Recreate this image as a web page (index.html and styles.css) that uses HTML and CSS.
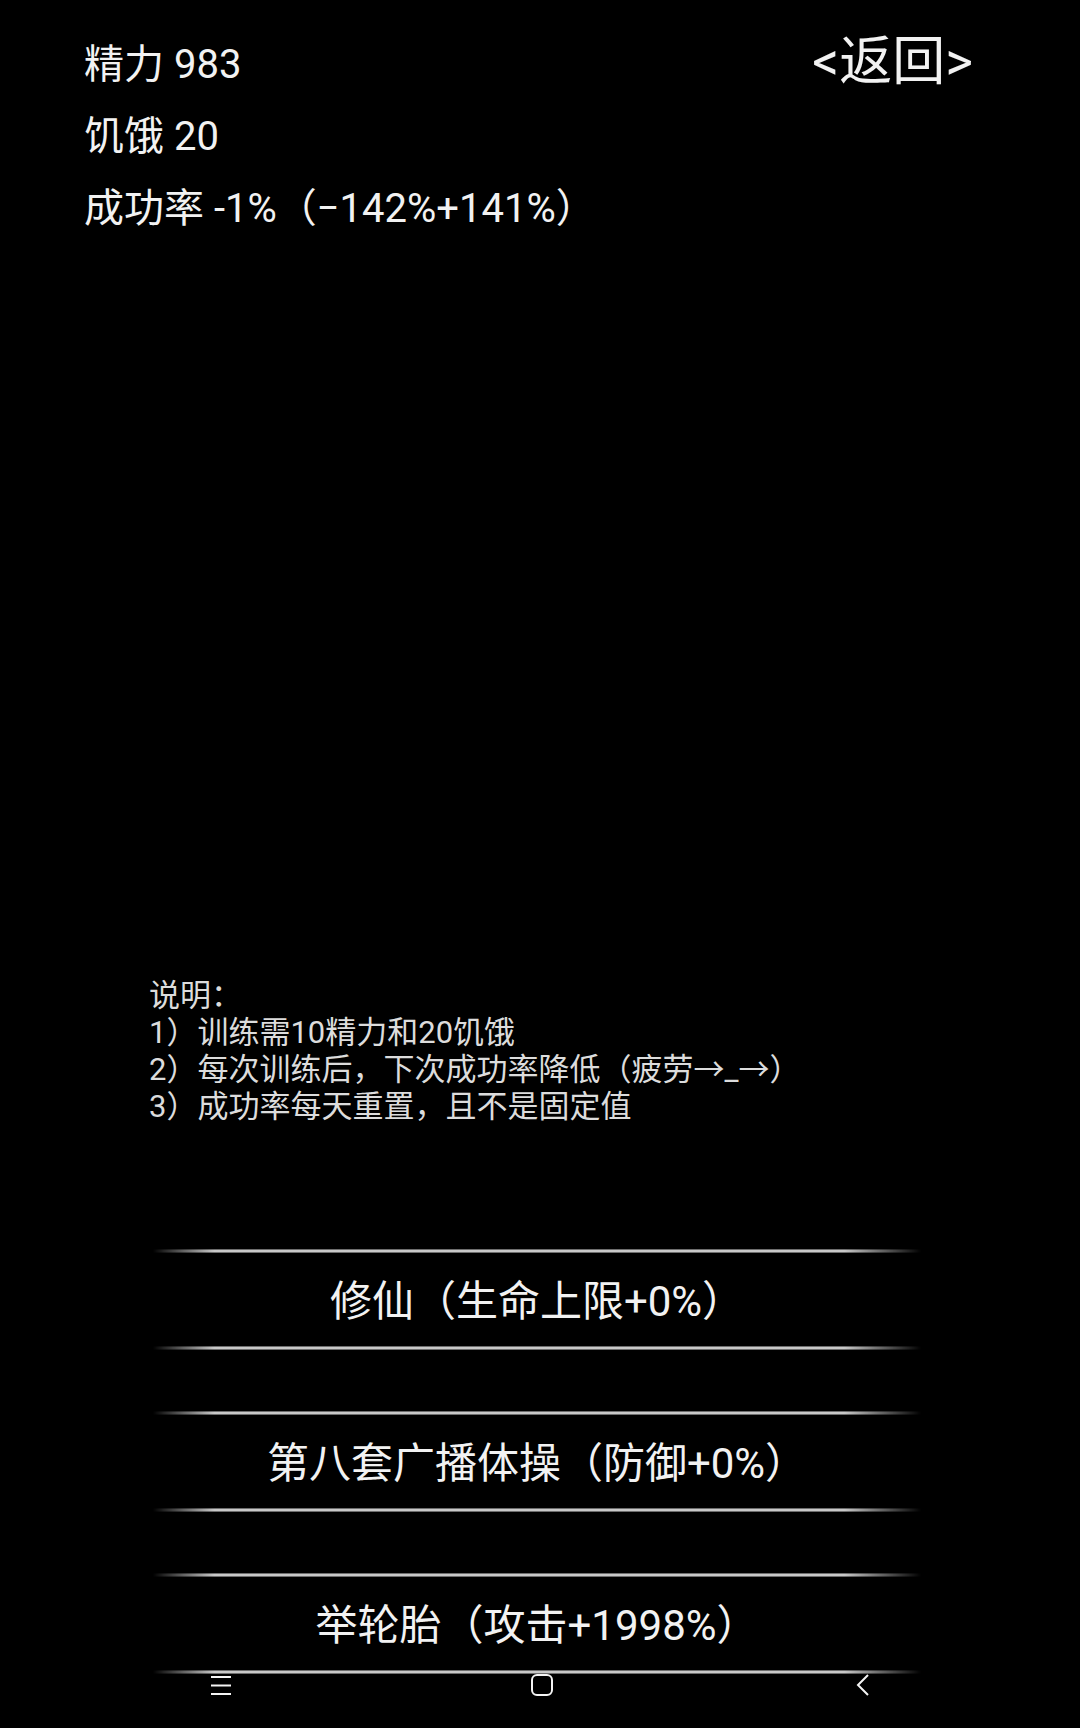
FILE: index.html
```html
<!DOCTYPE html>
<html>
	<head>
		<meta charset="utf-8">
		<title>训练</title>
		<link rel="stylesheet" href="styles.css">
	</head>
	<body>
		<div class="wrap">
			<header class="head">
				<div class="stats">
					<div>精力 983</div>
					<div>饥饿 20</div>
					<div>成功率 -1%（−142%+141%）</div>
				</div>
				<div class="back">&lt;返回&gt;</div>
			</header>

			<!--说明-->
			<div class="note">
				<div>说明：</div>
				<div>1）训练需10精力和20饥饿</div>
				<div>2）每次训练后，下次成功率降低（疲劳→_→）</div>
				<div>3）成功率每天重置，且不是固定值</div>
			</div>

			<!--训练选项-->
			<div class="list">
				<div class="btn"><span>修仙（生命上限+0%）</span></div>
				<div class="btn"><span>第八套广播体操（防御+0%）</span></div>
				<div class="btn"><span>举轮胎（攻击+1998%）</span></div>
			</div>
		</div>

		<!--底部导航-->
		<nav class="navbar">
			<div class="key">
				<svg width="22" height="20" viewBox="0 0 22 20"><path d="M1 2H21M1 10.5H21M1 19H21" stroke="#f4f4f4" stroke-width="2" fill="none"/></svg>
			</div>
			<div class="key">
				<svg width="22" height="22" viewBox="0 0 22 22"><rect x="1" y="1" width="20" height="20" rx="5" stroke="#f4f4f4" stroke-width="2" fill="none"/></svg>
			</div>
			<div class="key">
				<svg width="14" height="22" viewBox="0 0 14 22"><path d="M12 1L2 11L12 21" stroke="#f4f4f4" stroke-width="2" fill="none"/></svg>
			</div>
		</nav>
	</body>
</html>
```

FILE: styles.css
```css
body,html{
	margin: 0;
	background: #000;
}
.wrap{
	width: 1080px;
	height: 1728px;
	overflow: hidden;
	font-family: Roboto, "Noto Sans CJK SC", sans-serif;
	color: #f2f2f2;
}
.head{
	display: flex;
	justify-content: space-between;
	align-items: flex-start;
	padding: 29px 107px 0 84px;
}
.head .stats{
	font-size: 40px;
	line-height: 72px;
}
.head .back{
	font-size: 53px;
	line-height: 66px;
}
.note{
	margin: 732px 0 0 149px;
	font-size: 31px;
	line-height: 37px;
	color: #dcdcdc;
}
.list{
	display: flex;
	flex-direction: column;
	gap: 61px;
	width: 768px;
	margin: 124px 0 0 153px;
}
.btn{
	display: flex;
	flex-direction: column;
	align-items: center;
	font-size: 42px;
	line-height: 93px;
}
.btn span{
	padding-top: 4px;
	line-height: 89px;
}
.btn::before,.btn::after{
	content: "";
	display: block;
	align-self: stretch;
	height: 4px;
	background: linear-gradient(to bottom, #3c3c3c, #c8c8c8 35%, #c8c8c8 65%, #3c3c3c);
	-webkit-mask-image: linear-gradient(to right, transparent, #000 8%, #000 90%, transparent);
	mask-image: linear-gradient(to right, transparent, #000 8%, #000 90%, transparent);
}
.navbar{
	position: fixed;
	left: 0;
	right: 0;
	bottom: 0;
	height: 86px;
	display: grid;
	grid-template-columns: 1fr 1fr 1fr;
	padding: 0 56px 0 60px;
}
.navbar .key{
	display: flex;
	align-items: center;
	justify-content: center;
}
.navbar svg{
	display: block;
}
```
